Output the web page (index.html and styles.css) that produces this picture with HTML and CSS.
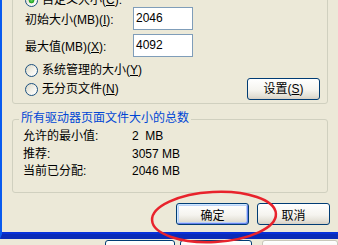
FILE: index.html
```html
<!DOCTYPE html>
<html>
    <head>
        <title>虚拟内存</title>
        <meta charset="UTF-8">
        <link rel="stylesheet" href="styles.css">
    </head>
    <body>
        <div class="window">
            <div class="panel">
                <div class="group group-size">
                    <div class="radio-row"><span class="radio checked"></span><span>自定义大小(<u>C</u>):</span></div>
                    <div class="field-row"><span class="label">初始大小(MB)(<u>I</u>):</span><div class="edit">2046</div></div>
                    <div class="field-row second"><span class="label">最大值(MB)(<u>X</u>):</span><div class="edit">4092</div></div>
                    <div class="radio-row r2"><span class="radio"></span><span>系统管理的大小(<u>Y</u>)</span></div>
                    <div class="radio-row r3"><span class="radio"></span><span>无分页文件(<u>N</u>)</span><button class="btn set">设置(<u>S</u>)</button></div>
                </div>
                <div class="group group-total">
                    <div class="legend">所有驱动器页面文件大小的总数</div>
                    <div class="info-row first"><span class="key">允许的最小值:</span><span>2&nbsp; MB</span></div>
                    <div class="info-row"><span class="key">推荐:</span><span>3057 MB</span></div>
                    <div class="info-row"><span class="key">当前已分配:</span><span>2046 MB</span></div>
                </div>
                <div class="actions">
                    <button class="btn default">确定</button>
                    <button class="btn">取消</button>
                </div>
            </div>
        </div>
        <div class="behind">
            <div class="back-btn a"></div>
            <div class="back-btn b"></div>
            <div class="back-btn c"></div>
        </div>
        <svg class="mark" width="338" height="245" viewBox="0 0 338 245">
            <ellipse cx="214" cy="217" rx="62" ry="25" transform="rotate(-3 214 217)" fill="none" stroke="#E8232C" stroke-width="2.5"/>
        </svg>
    </body>
</html>
```
FILE: styles.css
```css
html, body{
    margin: 0;
    width: 338px;
    height: 245px;
    overflow: hidden;
}
body{
    position: relative;
    background: #ECE9D8;
    font-family: "Liberation Sans", "Noto Sans CJK SC", sans-serif;
    font-size: 12px;
    color: #000;
}
u{
    text-decoration: underline;
}
.window{
    width: 400px;
    height: 234px;
    border-left: 2px solid #0A5BEF;
    border-bottom: 5px solid #0A2BB8;
    box-shadow: inset 0 -2px 0 #0831D9;
    overflow: hidden;
}
.panel{
    padding-left: 10px;
}
.group{
    box-sizing: border-box;
    width: 316px;
    border: 1px solid #D0D0BF;
    border-radius: 3px;
    display: flex;
    flex-direction: column;
}
.group-size{
    margin-top: -20px;
    height: 124px;
    padding: 12px 7px 0 12px;
}
.radio-row{
    height: 14px;
    display: flex;
    align-items: center;
    gap: 4px;
    line-height: 14px;
}
.radio-row.r2{
    margin-top: 6px;
}
.radio-row.r3{
    margin-top: 1px;
    height: 22px;
}
.radio{
    box-sizing: border-box;
    width: 13px;
    height: 13px;
    flex: none;
    border: 1px solid #1C5180;
    border-radius: 50%;
    background: linear-gradient(135deg, #DCD9C5, #F5F4EE 60%, #FFFFFF);
}
.radio.checked{
    background: radial-gradient(circle, #5ED65E 0, #21A121 2.5px, transparent 3.2px),
                linear-gradient(135deg, #DCD9C5, #F5F4EE 60%, #FFFFFF);
}
.field-row{
    height: 23px;
    display: flex;
    align-items: center;
}
.field-row.second{
    margin-top: 4px;
}
.label{
    width: 108px;
}
.edit{
    box-sizing: border-box;
    width: 60px;
    height: 23px;
    border: 1px solid #7F9DB9;
    background: #fff;
    padding: 2px 2px;
    line-height: 16px;
    align-self: flex-start;
}
.btn{
    box-sizing: border-box;
    width: 73px;
    height: 22px;
    padding: 0;
    border: 1px solid #003C74;
    border-radius: 3px;
    background: linear-gradient(#FFFFFF, #F5F4EF 55%, #E3E0D6 85%, #D6D0C5);
    font: inherit;
    color: #000;
}
.btn.set{
    margin-left: auto;
}
.btn.default{
    box-shadow: inset 1px 1px 0 #CEE7FF, inset -1px -1px 0 #6982EE, inset 0 0 0 2px #B9D1F8;
}
.group-total{
    margin-top: 15px;
    height: 74px;
}
.legend{
    align-self: flex-start;
    margin: -9px 0 0 6px;
    padding: 0 2px;
    line-height: 14px;
    background: #ECE9D8;
    color: #0046D5;
}
.info-row{
    height: 17.5px;
    line-height: 17.5px;
    padding-left: 10px;
    display: flex;
}
.info-row.first{
    margin-top: 3px;
}
.key{
    width: 109px;
}
.actions{
    margin: 10px 0 0 164px;
    display: flex;
    gap: 8px;
}
.behind{
    height: 6px;
    display: flex;
    padding-top: 1px;
}
.back-btn{
    box-sizing: border-box;
    height: 12px;
    border: 1px solid #003C74;
    border-radius: 3px;
    background: linear-gradient(#FFFFFF, #F2F1EC);
}
.back-btn.a{
    margin-left: 105px;
    width: 73px;
}
.back-btn.b{
    margin-left: 5px;
    width: 76px;
}
.back-btn.c{
    margin-left: 10px;
    width: 80px;
    border-color: #C9C7BA;
}
.mark{
    position: absolute;
    left: 0;
    top: 0;
    pointer-events: none;
}
```
